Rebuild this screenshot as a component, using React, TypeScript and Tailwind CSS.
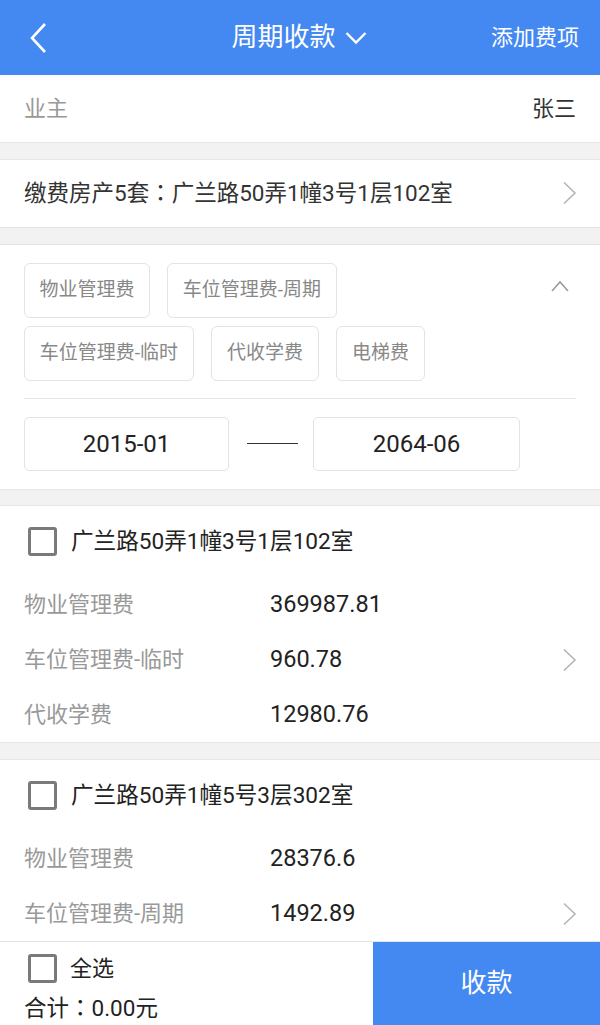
import React from 'react'

const font = "font-['Roboto','Noto_Sans_CJK_SC',sans-serif]"

const chips = [
  [
    { label: '物业管理费', w: 'w-[126px]' },
    { label: '车位管理费-周期', w: 'w-[170px]' },
  ],
  [
    { label: '车位管理费-临时', w: 'w-[170px]' },
    { label: '代收学费', w: 'w-[108px]' },
    { label: '电梯费', w: 'w-[89px]' },
  ],
]

const houses = [
  {
    name: '广兰路50弄1幢3号1层102室',
    fees: [
      { label: '物业管理费', value: '369987.81' },
      { label: '车位管理费-临时', value: '960.78', arrow: true },
      { label: '代收学费', value: '12980.76' },
    ],
  },
  {
    name: '广兰路50弄1幢5号3层302室',
    fees: [
      { label: '物业管理费', value: '28376.6' },
      { label: '车位管理费-周期', value: '1492.89', arrow: true },
    ],
  },
]

// centred full-width colon, as the android font draws it
const Colon = () => <span className="font-['Noto_Sans_CJK_JP']">：</span>

function ChevronRight() {
  return (
    <svg width="16" height="24" viewBox="0 0 16 24" className="shrink-0">
      <path d="M2 1.5 L13 12 L2 22.5" fill="none" stroke="#b5b5b5" strokeWidth="1.6" />
    </svg>
  )
}

function Checkbox() {
  return <div className="w-[29px] h-[29px] border-[3px] border-[#7a7a7a] rounded-[3px] shrink-0" />
}

function Gap() {
  return <div className="h-[18px] bg-[#f2f2f2] border-y border-[#e6e6e6]" />
}

export default function App() {
  return (
    <div className={`${font} [text-spacing-trim:space-all] w-[600px] h-[1025px] flex flex-col bg-[#f2f2f2] overflow-hidden`}>
      {/* header */}
      <div className="h-[75px] bg-[#4488f1] flex items-center px-[21px] shrink-0">
        <svg width="20" height="32" viewBox="0 0 20 32" className="ml-[8px]">
          <path d="M16 2 L3 16 L16 30" fill="none" stroke="#fff" strokeWidth="2.6" />
        </svg>
        <div className="flex-1 flex items-center justify-center gap-[9px] pl-[58px]">
          <span className="text-white text-[26px]">周期收款</span>
          <svg width="22" height="14" viewBox="0 0 22 14">
            <path d="M1.5 2 L11 11.5 L20.5 2" fill="none" stroke="#fff" strokeWidth="2.4" />
          </svg>
        </div>
        <span className="text-white text-[22px]">添加费项</span>
      </div>

      <div className="flex-1 overflow-hidden flex flex-col">
        {/* owner */}
        <div className="h-[67px] bg-white flex items-center justify-between px-[24px] shrink-0">
          <span className="text-[22px] text-[#999]">业主</span>
          <span className="text-[22px] text-[#333]">张三</span>
        </div>
        <Gap />

        {/* property */}
        <div className="h-[67px] bg-white flex items-center justify-between pl-[24px] pr-[22px] shrink-0">
          <span className="text-[22.5px] text-[#333]">
            缴费房产5套<Colon />广兰路50弄1幢3号1层102室
          </span>
          <ChevronRight />
        </div>
        <Gap />

        {/* fee filter */}
        <div className="bg-white px-[24px] pt-[18px] pb-[18px] shrink-0">
          <div className="flex items-start">
            <div className="flex-1 flex flex-col gap-[8px]">
              {chips.map((row, i) => (
                <div key={i} className="flex gap-[17px]">
                  {row.map((c) => (
                    <div
                      key={c.label}
                      className={`${c.w} h-[55px] border border-[#e3e3e3] rounded-[6px] flex items-center justify-center text-[19px] text-[#888]`}
                    >
                      {c.label}
                    </div>
                  ))}
                </div>
              ))}
            </div>
            <svg width="18" height="12" viewBox="0 0 18 12" className="mt-[17px] mr-[7px]">
              <path d="M1 11 L9 2 L17 11" fill="none" stroke="#999" strokeWidth="1.5" />
            </svg>
          </div>
          <div className="h-px bg-[#e6e6e6] mt-[17px] mb-[18px]" />
          <div className="flex items-center">
            <div className="w-[205px] h-[54px] border border-[#e3e3e3] rounded-[5px] flex items-center justify-center text-[24px] text-[#222]">
              2015-01
            </div>
            <div className="w-[51px] h-px bg-[#333] ml-[18px] mr-[15px]" />
            <div className="w-[207px] h-[54px] border border-[#e3e3e3] rounded-[5px] flex items-center justify-center text-[24px] text-[#222]">
              2064-06
            </div>
          </div>
        </div>

        {houses.map((h) => (
          <React.Fragment key={h.name}>
            <Gap />
            <div className="bg-white shrink-0">
              <div className="h-[71px] flex items-center pl-[28px] gap-[14px]">
                <Checkbox />
                <span className="text-[22.6px] text-[#222]">{h.name}</span>
              </div>
              {h.fees.map((f) => (
                <div key={f.label} className="h-[55px] flex items-center pl-[24px] pr-[22px]">
                  <span className="w-[246px] text-[22px] text-[#999]">{f.label}</span>
                  <span className="flex-1 text-[23.5px] text-[#222]">{f.value}</span>
                  {f.arrow && <ChevronRight />}
                </div>
              ))}
            </div>
          </React.Fragment>
        ))}
      </div>

      {/* bottom bar */}
      <div className="h-[84px] bg-white border-t border-[#e3e3e3] flex shrink-0">
        <div className="flex-1 flex flex-col justify-center pl-[24px] gap-[10px] pt-[4px]">
          <div className="flex items-center gap-[13px] pl-[4px]">
            <Checkbox />
            <span className="text-[22px] text-[#222]">全选</span>
          </div>
          <span className="text-[22.5px] text-[#222] leading-none">
            合计<Colon />0.00元
          </span>
        </div>
        <div className="w-[227px] bg-[#4488f1] flex items-center justify-center text-white text-[26px]">
          收款
        </div>
      </div>
    </div>
  )
}
